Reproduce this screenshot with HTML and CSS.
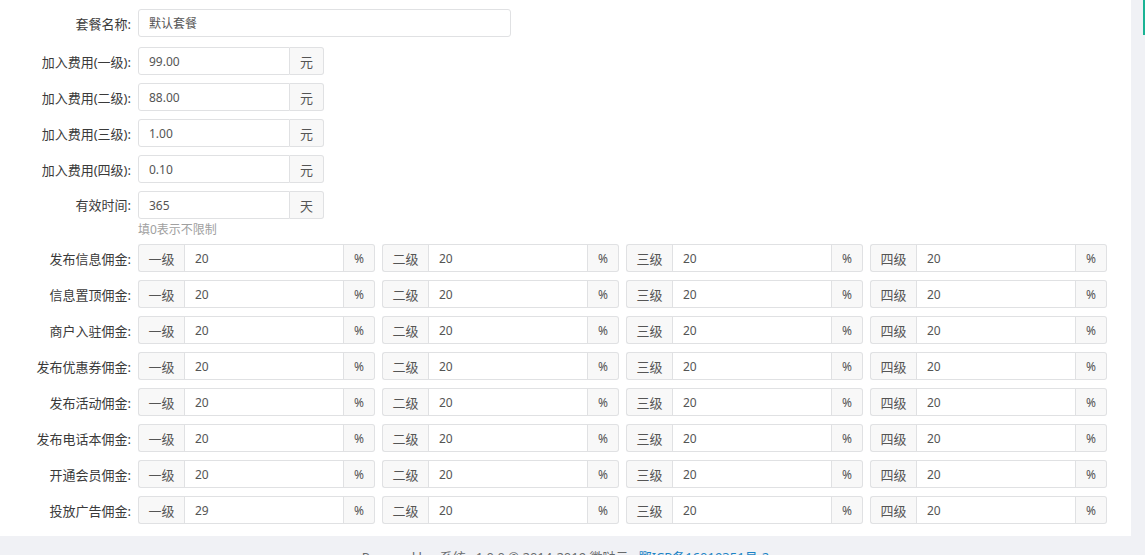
FILE: index.html
```html
<!DOCTYPE html>
<html lang="zh-CN">
<head>
    <meta charset="UTF-8">
    <meta name="viewport" content="width=device-width, initial-scale=1.0">
    <title>套餐设置</title>
    <link rel="stylesheet" href="styles.css">
</head>
<body>
    <div class="edge-bar"></div>
    <div class="panel">
        <form class="form">
            <div class="row row-first">
                <label class="label">套餐名称:</label>
                <input class="text name" type="text" value="默认套餐">
            </div>

            <div class="row">
                <label class="label">加入费用(一级):</label>
                <div class="group small">
                    <input class="text" type="text" value="99.00">
                    <span class="addon unit">元</span>
                </div>
            </div>
            <div class="row">
                <label class="label">加入费用(二级):</label>
                <div class="group small">
                    <input class="text" type="text" value="88.00">
                    <span class="addon unit">元</span>
                </div>
            </div>
            <div class="row">
                <label class="label">加入费用(三级):</label>
                <div class="group small">
                    <input class="text" type="text" value="1.00">
                    <span class="addon unit">元</span>
                </div>
            </div>
            <div class="row">
                <label class="label">加入费用(四级):</label>
                <div class="group small">
                    <input class="text" type="text" value="0.10">
                    <span class="addon unit">元</span>
                </div>
            </div>
            <div class="row row-top">
                <label class="label">有效时间:</label>
                <div>
                    <div class="group small">
                        <input class="text" type="text" value="365">
                        <span class="addon unit">天</span>
                    </div>
                    <div class="help">填0表示不限制</div>
                </div>
            </div>

            <div id="commissions"></div>
        </form>
    </div>
    <div class="footer">
        Powered by&nbsp; 系统 v1.0.0 © 2014-2019 微哒云 &nbsp; <a href="#">鄂ICP备16019351号-2</a>
    </div>

    <script>
        const rows = [
            { name: "发布信息佣金", values: [20, 20, 20, 20] },
            { name: "信息置顶佣金", values: [20, 20, 20, 20] },
            { name: "商户入驻佣金", values: [20, 20, 20, 20] },
            { name: "发布优惠券佣金", values: [20, 20, 20, 20] },
            { name: "发布活动佣金", values: [20, 20, 20, 20] },
            { name: "发布电话本佣金", values: [20, 20, 20, 20] },
            { name: "开通会员佣金", values: [20, 20, 20, 20] },
            { name: "投放广告佣金", values: [29, 20, 20, 20] }
        ];
        const levels = ["一级", "二级", "三级", "四级"];
        const box = document.getElementById("commissions");

        rows.forEach((row) => {
            const line = document.createElement("div");
            line.className = "row";
            let html = `<label class="label">${row.name}:</label><div class="levels">`;
            row.values.forEach((value, i) => {
                html += `<div class="group">
                    <span class="addon level">${levels[i]}</span>
                    <input class="text" type="text" value="${value}">
                    <span class="addon pct">%</span>
                </div>`;
            });
            html += "</div>";
            line.innerHTML = html;
            box.appendChild(line);
        });
    </script>
</body>
</html>
```

FILE: styles.css
```css
body {
    margin: 0;
    background-color: #f0f1f5;
    font-family: "Noto Sans", "Noto Sans CJK SC", sans-serif;
    font-size: 13px;
    color: #333;
    position: relative;
}
.edge-bar {
    position: absolute;
    top: 0;
    right: 0;
    width: 2px;
    height: 35px;
    background: #1ab394;
}
.panel {
    width: 1131px;
    background: #fff;
    box-sizing: border-box;
    padding: 9px 0 12px 0;
}
.row {
    display: flex;
    align-items: center;
    margin-bottom: 8px;
}
.row:last-child {
    margin-bottom: 0;
}
.row-first {
    margin-bottom: 10px;
}
.row-top {
    align-items: flex-start;
}
.row-top .label {
    line-height: 28px;
}
.label {
    width: 131px;
    margin-right: 7px;
    text-align: right;
    flex-shrink: 0;
    color: #3a3a3a;
}
.text {
    height: 28px;
    box-sizing: border-box;
    border: 1px solid #e0e1e3;
    border-radius: 3px;
    padding: 0 10px;
    font-family: "Noto Sans", "Noto Sans CJK SC", sans-serif;
    font-size: 12px;
    color: #555;
    outline: none;
    background: #fff;
    min-width: 0;
}
.text.name {
    width: 373px;
}
.group {
    display: flex;
    height: 28px;
}
.group .text {
    flex: 1;
    border-radius: 0;
}
.group .text:first-child {
    border-radius: 3px 0 0 3px;
}
.small {
    width: 186px;
}
.addon {
    display: flex;
    align-items: center;
    justify-content: center;
    box-sizing: border-box;
    height: 28px;
    background: #f8f8f8;
    border: 1px solid #e0e1e3;
    color: #555;
    font-size: 12px;
    flex-shrink: 0;
}
.unit {
    width: 34px;
    border-left: none;
    border-radius: 0 3px 3px 0;
    font-size: 13px;
}
.level {
    width: 46px;
    border-right: none;
    border-radius: 3px 0 0 3px;
    font-size: 13px;
}
.pct {
    width: 31px;
    border-left: none;
    border-radius: 0 3px 3px 0;
}
.levels {
    display: grid;
    grid-template-columns: repeat(4, 237px);
    column-gap: 7px;
}
.help {
    margin-top: 4px;
    height: 13px;
    line-height: 14px;
    font-size: 12px;
    color: #a0a0a0;
}
#commissions {
    margin-top: 8px;
    display: flex;
    flex-direction: column;
}
.footer {
    width: 1131px;
    padding-top: 11px;
    line-height: 20px;
    text-align: center;
    color: #676a6c;
    font-size: 13px;
}
.footer a {
    color: #1c84c6;
    text-decoration: none;
}
```
